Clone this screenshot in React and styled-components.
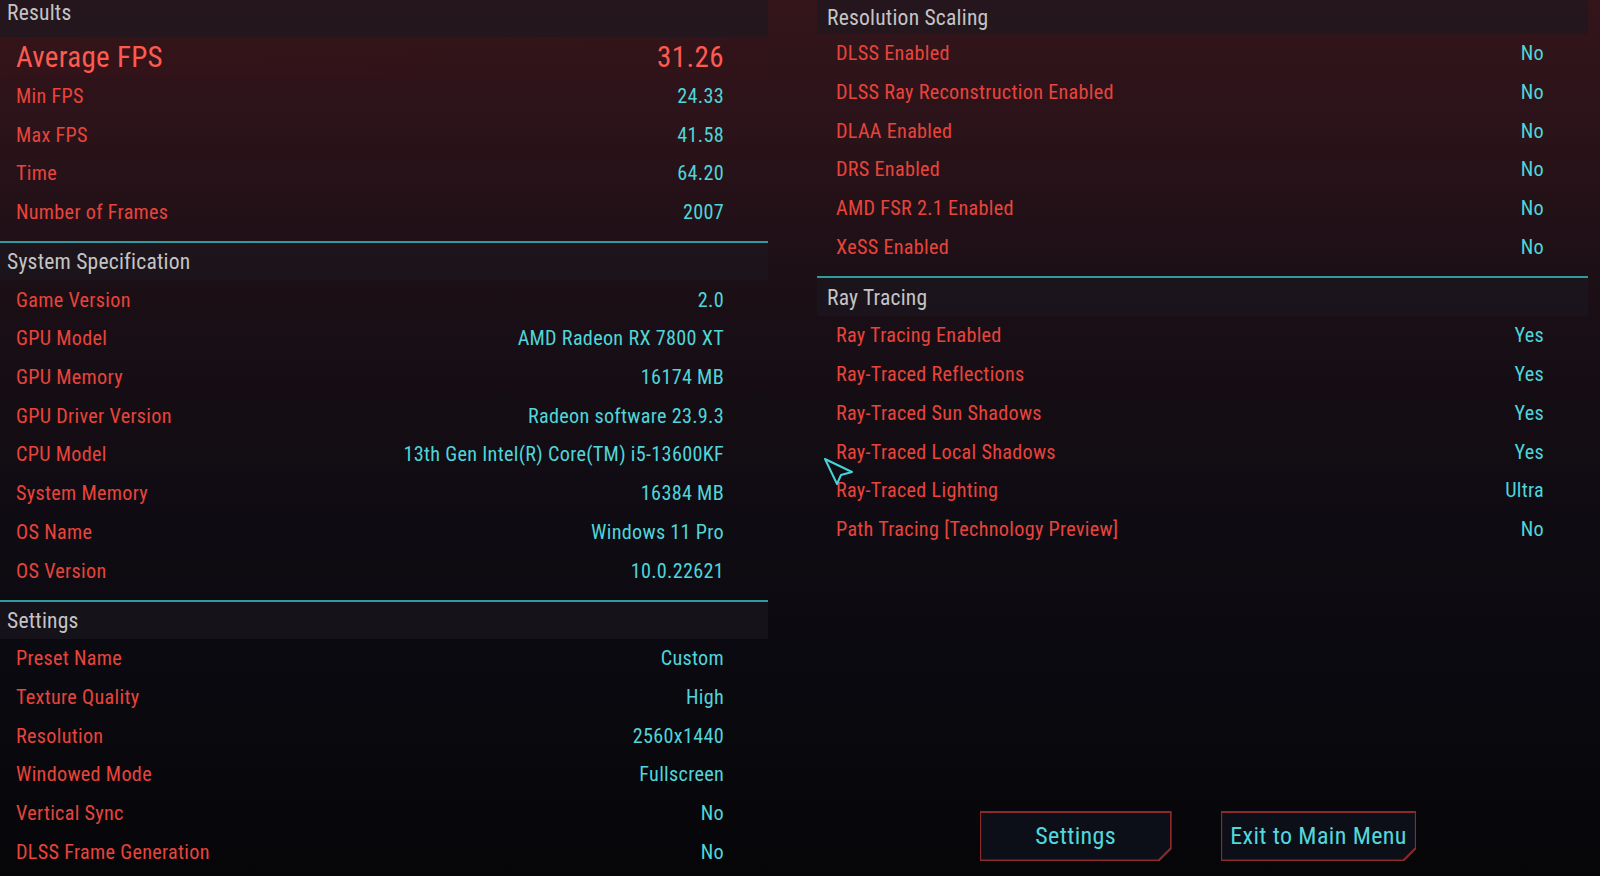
import React from "react";
import styled, {createGlobalStyle} from "styled-components";

const results = [
    ['Min FPS', '24.33'],
    ['Max FPS', '41.58'],
    ['Time', '64.20'],
    ['Number of Frames', '2007'],
];

const spec = [
    ['Game Version', '2.0'],
    ['GPU Model', 'AMD Radeon RX 7800 XT'],
    ['GPU Memory', '16174 MB'],
    ['GPU Driver Version', 'Radeon software 23.9.3'],
    ['CPU Model', '13th Gen Intel(R) Core(TM) i5-13600KF'],
    ['System Memory', '16384 MB'],
    ['OS Name', 'Windows 11 Pro'],
    ['OS Version', '10.0.22621'],
];

const settings = [
    ['Preset Name', 'Custom'],
    ['Texture Quality', 'High'],
    ['Resolution', '2560x1440'],
    ['Windowed Mode', 'Fullscreen'],
    ['Vertical Sync', 'No'],
    ['DLSS Frame Generation', 'No'],
];

const scaling = [
    ['DLSS Enabled', 'No'],
    ['DLSS Ray Reconstruction Enabled', 'No'],
    ['DLAA Enabled', 'No'],
    ['DRS Enabled', 'No'],
    ['AMD FSR 2.1 Enabled', 'No'],
    ['XeSS Enabled', 'No'],
];

const rayTracing = [
    ['Ray Tracing Enabled', 'Yes'],
    ['Ray-Traced Reflections', 'Yes'],
    ['Ray-Traced Sun Shadows', 'Yes'],
    ['Ray-Traced Local Shadows', 'Yes'],
    ['Ray-Traced Lighting', 'Ultra'],
    ['Path Tracing [Technology Preview]', 'No'],
];

const Section = ({title, rows, pad, headerH, topAligned, children}) => (
    <SectionBox>
        <Header $pad={pad} $h={headerH} $top={topAligned}>{title}</Header>
        {children}
        {rows.map(([label, value]) => (
            <Row key={label} $pad={pad + 9}>
                <Label>{label}</Label>
                <Value>{value}</Value>
            </Row>
        ))}
    </SectionBox>
);

const App = () => {
  return (
    <>
        <GlobalStyle/>
        <Screen>
            <LeftColumn>
                <Section title="Results" rows={results} pad={7} topAligned>
                    <AverageRow $pad={16}>
                        <BigLabel>Average FPS</BigLabel>
                        <BigValue>31.26</BigValue>
                    </AverageRow>
                </Section>
                <Divider/>
                <Section title="System Specification" rows={spec} pad={7}/>
                <Divider/>
                <Section title="Settings" rows={settings} pad={7}/>
            </LeftColumn>
            <RightColumn>
                <Section title="Resolution Scaling" rows={scaling} pad={10} headerH={34}/>
                <Divider/>
                <Section title="Ray Tracing" rows={rayTracing} pad={10} headerH={38}/>
                <ButtonBar>
                    <MenuButton>
                        <ButtonFace>Settings</ButtonFace>
                    </MenuButton>
                    <MenuButton>
                        <ButtonFace>Exit to Main Menu</ButtonFace>
                    </MenuButton>
                </ButtonBar>
                <Cursor width="34" height="32" viewBox="0 0 34 32">
                    <polygon points="3,3 30,16 19,19 15,28" fill="none" stroke="#46d3da" strokeWidth="2" strokeLinejoin="round"/>
                </Cursor>
            </RightColumn>
        </Screen>
    </>
  )
}

const GlobalStyle = createGlobalStyle`
  html, body {
    margin: 0;
    padding: 0;
    background: #07070b;
  }
  * {
    box-sizing: border-box;
  }
`;

const Screen = styled.div`
  width: 1600px;
  height: 876px;
  overflow: hidden;
  display: flex;
  gap: 49px;
  padding-right: 12px;
  font-family: "Roboto Condensed", "Open Sans", "Liberation Sans", sans-serif;
  font-stretch: 75%;
  background: linear-gradient(180deg, #33151a 0%, #2b1319 14%, #1c0f16 32%, #110c13 55%, #0b0a10 75%, #060609 100%);
`;

const LeftColumn = styled.div`
  width: 768px;
  display: flex;
  flex-direction: column;
`;

const RightColumn = styled.div`
  position: relative;
  flex: 1;
  display: flex;
  flex-direction: column;
`;

const SectionBox = styled.div`
  display: flex;
  flex-direction: column;
  padding-bottom: 10px;
`;

const Header = styled.div`
  height: ${p => p.$h || 37}px;
  display: flex;
  align-items: ${p => p.$top ? 'flex-start' : 'center'};
  padding-top: ${p => p.$top ? '0' : '0'};
  padding-left: ${p => p.$pad}px;
  background: rgba(28, 24, 32, 0.6);
  color: #c4c4c6;
  font-size: 21.6px;
  letter-spacing: 0.2px;
`;

const Row = styled.div`
  height: 38.7px;
  display: flex;
  align-items: center;
  justify-content: space-between;
  padding-left: ${p => p.$pad}px;
  padding-right: 44px;
  font-size: 20.2px;
  letter-spacing: 0.3px;
`;

const AverageRow = styled(Row)`
  height: 39.6px;
  background: linear-gradient(90deg, rgba(70, 16, 22, 0.14), rgba(60, 16, 22, 0.06));
`;

const Label = styled.span`
  color: #e8443b;
`;

const Value = styled.span`
  color: #4fd5da;
`;

const BigLabel = styled.span`
  color: #ff5a50;
  font-size: 29px;
`;

const BigValue = styled.span`
  color: #ff5a50;
  font-size: 29px;
  letter-spacing: 0.4px;
`;

const Divider = styled.div`
  height: 2px;
  background: #2f9aa0;
  flex-shrink: 0;
`;

const ButtonBar = styled.div`
  margin-top: auto;
  display: flex;
  justify-content: center;
  gap: 49px;
  padding: 0 9px 15px 0;
`;

const cut = 'polygon(0 0, 100% 0, 100% calc(100% - 12px), calc(100% - 12px) 100%, 0 100%)';

const MenuButton = styled.button`
  height: 50px;
  min-width: 192px;
  padding: 1.5px;
  border: 0;
  background: #8c2a2b;
  clip-path: ${cut};
  cursor: pointer;
  font-family: inherit;
  font-stretch: inherit;
`;

const ButtonFace = styled.div`
  height: 100%;
  display: flex;
  align-items: center;
  justify-content: center;
  padding: 0 8px;
  background: #0d0f18;
  clip-path: ${cut};
  color: #52d8dc;
  font-size: 24px;
  letter-spacing: 0.4px;
`;

const Cursor = styled.svg`
  position: absolute;
  left: 5px;
  top: 456px;
`;

export default App;
